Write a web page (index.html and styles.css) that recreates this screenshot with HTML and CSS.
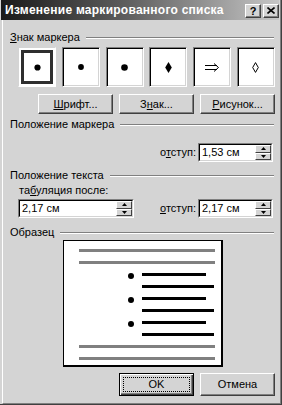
FILE: index.html
```html
<!DOCTYPE html>
<html lang="ru">
<head>
<meta charset="utf-8">
<title>Изменение маркированного списка</title>
<link rel="stylesheet" href="styles.css">
</head>
<body>
<div class="window">
  <div class="frame">
    <div class="titlebar">
      <span class="title">Изменение маркированного списка</span>
      <span class="tbtns">
        <span class="tbtn q">?</span>
        <span class="tbtn x"><svg width="8" height="7" viewBox="0 0 8 7"><path d="M0.5 0.5L7.5 6.5M7.5 0.5L0.5 6.5" stroke="#000" stroke-width="1.6" fill="none"/></svg></span>
      </span>
    </div>
    <div class="content">
      <div class="ghead g1"><span><u>З</u>нак маркера</span></div>
      <div class="boxes">
        <div class="box sel"><svg width="7" height="7" viewBox="0 0 7 7"><circle cx="3.5" cy="3.5" r="3.1"/></svg></div>
        <div class="box"><svg width="6" height="6" viewBox="0 0 6 6"><circle cx="3" cy="3" r="2.9"/></svg></div>
        <div class="box"><svg width="7" height="7" viewBox="0 0 7 7"><circle cx="3.5" cy="3.5" r="3.3"/></svg></div>
        <div class="box"><svg width="7" height="11" viewBox="0 0 7 11"><path d="M3.5 0L6.8 5.5L3.5 11L0.2 5.5Z"/></svg></div>
        <div class="box"><svg width="15" height="9" viewBox="0 0 15 9"><path d="M0 2.5H12M0 6.5H12M9 0.5L13.5 4.5L9 8.5" stroke="#000" stroke-width="1" fill="none"/></svg></div>
        <div class="box"><svg width="7" height="11" viewBox="0 0 7 11"><path d="M3.5 0.6L6.3 5.5L3.5 10.4L0.7 5.5Z" stroke="#000" stroke-width="1" fill="none"/></svg></div>
      </div>
      <div class="btnrow top">
        <div class="btn"><span><u>Ш</u>рифт...</span></div>
        <div class="btn"><span>З<u>н</u>ак...</span></div>
        <div class="btn"><span><u>Р</u>исунок...</span></div>
      </div>
      <div class="ghead g2"><span>Положение маркера</span></div>
      <div class="spinrow r1">
        <span class="lbl">о<u>т</u>ступ:</span>
        <div class="spin w-small">
          <div class="spin-in">
            <span class="val">1,53 см</span>
            <span class="arrows">
              <span class="arr up"><svg width="5" height="3" viewBox="0 0 5 3"><path d="M2.5 0L5 3H0Z"/></svg></span>
              <span class="arr down"><svg width="5" height="3" viewBox="0 0 5 3"><path d="M0 0H5L2.5 3Z"/></svg></span>
            </span>
          </div>
        </div>
      </div>
      <div class="ghead g3"><span>Положение текста</span></div>
      <div class="sublbl">та<u>б</u>уляция после:</div>
      <div class="spinrow r2">
        <div class="spin w-wide">
          <div class="spin-in">
            <span class="val">2,17 см</span>
            <span class="arrows">
              <span class="arr up"><svg width="5" height="3" viewBox="0 0 5 3"><path d="M2.5 0L5 3H0Z"/></svg></span>
              <span class="arr down"><svg width="5" height="3" viewBox="0 0 5 3"><path d="M0 0H5L2.5 3Z"/></svg></span>
            </span>
          </div>
        </div>
        <div class="grp">
          <span class="lbl"><u>о</u>тступ:</span>
          <div class="spin w-small">
            <div class="spin-in">
              <span class="val">2,17 см</span>
              <span class="arrows">
                <span class="arr up"><svg width="5" height="3" viewBox="0 0 5 3"><path d="M2.5 0L5 3H0Z"/></svg></span>
                <span class="arr down"><svg width="5" height="3" viewBox="0 0 5 3"><path d="M0 0H5L2.5 3Z"/></svg></span>
              </span>
            </div>
          </div>
        </div>
      </div>
      <div class="ghead g4"><span>Образец</span></div>
      <div class="sample">
        <div class="ln gray"></div>
        <div class="ln gray"></div>
        <div class="ln brow"><span class="dot"></span><span class="bl short"></span></div>
        <div class="ln brow"><span class="bl long"></span></div>
        <div class="ln brow"><span class="dot"></span><span class="bl short"></span></div>
        <div class="ln brow"><span class="bl long"></span></div>
        <div class="ln brow"><span class="dot"></span><span class="bl short"></span></div>
        <div class="ln brow"><span class="bl long"></span></div>
        <div class="ln gray"></div>
        <div class="ln gray"></div>
      </div>
      <div class="btnrow bottom">
        <div class="btn default"><span>OK</span></div>
        <div class="btn"><span>Отмена</span></div>
      </div>
    </div>
  </div>
</div>
</body>
</html>
```

FILE: styles.css
```css
html, body {
  margin: 0;
  padding: 0;
  background: #d4d4d4;
}
body {
  font-family: "Liberation Sans", Arial, sans-serif;
  font-size: 11px;
  color: #000;
}
u {
  text-decoration: underline;
  text-underline-offset: 1px;
}
.window {
  width: 282px;
  height: 405px;
  box-sizing: border-box;
  background: #d4d4d4;
  border-right: 1px solid #404040;
  border-bottom: 1px solid #404040;
  padding-left: 2px;
  display: flex;
  flex-direction: column;
}
.frame {
  flex: 1;
  display: flex;
  flex-direction: column;
  border-left: 1px solid #fff;
  border-right: 1px solid #808080;
  border-bottom: 1px solid #808080;
}
.titlebar {
  height: 20px;
  margin-left: -2px;
  margin-right: 1px;
  display: flex;
  align-items: flex-start;
  justify-content: space-between;
  background: linear-gradient(to right, #1a1a1a 0%, #5e5e5e 45%, #c6c6c6 100%);
}
.title {
  color: #fff;
  font-weight: bold;
  font-size: 12px;
  letter-spacing: 0.25px;
  line-height: 20px;
  padding-left: 4px;
  white-space: nowrap;
}
.tbtns {
  display: flex;
  gap: 2px;
  margin-top: 4px;
}
.tbtn {
  width: 16px;
  height: 14px;
  box-sizing: border-box;
  background: #d4d4d4;
  border: 1px solid;
  border-color: #fff #404040 #404040 #fff;
  box-shadow: inset -1px -1px 0 #808080;
  display: flex;
  align-items: center;
  justify-content: center;
}
.tbtn.q {
  font-weight: bold;
  font-size: 11px;
  line-height: 12px;
  padding-bottom: 1px;
}
.tbtn.x svg {
  margin-bottom: 1px;
}
.content {
  flex: 1;
  display: flex;
  flex-direction: column;
  padding: 0 5px 0 7px;
}
.ghead {
  display: flex;
  align-items: center;
  height: 13px;
  line-height: 13px;
  white-space: nowrap;
}
.ghead::after {
  content: "";
  flex: 1;
  height: 0;
  border-top: 1px solid #808080;
  border-bottom: 1px solid #fff;
  margin-left: 6px;
  margin-right: 1px;
}
.g1 { margin-top: 11px; }
.g2 { margin-top: 4px; }
.g3 { margin-top: 7px; }
.g4 { margin-top: 8px; }

.boxes {
  margin-top: 3px;
  padding-left: 8px;
  height: 40px;
  display: flex;
  justify-content: space-between;
}
.box {
  width: 38px;
  height: 40px;
  box-sizing: border-box;
  background: #fff;
  border: 1px solid;
  border-color: #808080 #fff #fff #808080;
  box-shadow: inset 1px 1px 0 #000, inset -1px -1px 0 #d4d4d4;
  display: flex;
  align-items: center;
  justify-content: center;
}
.box svg {
  display: block;
  fill: #000;
}
.box.sel {
  border-color: #d4d4d4 #fff #fff #d4d4d4;
  box-shadow: inset 0 0 0 2px #fff, inset 0 0 0 5px #2e2e2e;
}

.btnrow {
  display: flex;
  justify-content: flex-end;
  gap: 6px;
}
.btnrow.top {
  margin-top: 7px;
}
.btnrow.bottom {
  margin-top: 6px;
}
.btn {
  position: relative;
  width: 75px;
  height: 20px;
  box-sizing: border-box;
  background: #d4d4d4;
  border: 1px solid;
  border-color: #fff #404040 #404040 #fff;
  box-shadow: inset -1px -1px 0 #808080;
  display: flex;
  align-items: center;
  justify-content: center;
  line-height: 13px;
}
.btnrow.bottom .btn {
  height: 23px;
}
.btn.default {
  border-color: #000;
  box-shadow: inset 1px 1px 0 #fff, inset -1px -1px 0 #404040, inset -2px -2px 0 #808080;
}
.btn.default::after {
  content: "";
  position: absolute;
  left: 3px;
  top: 3px;
  right: 3px;
  bottom: 3px;
  border: 1px dotted #000;
}

.spinrow {
  display: flex;
  align-items: center;
  height: 19px;
}
.spinrow.r1 {
  margin-top: 12px;
  justify-content: flex-end;
  padding-right: 2px;
}
.spinrow.r2 {
  margin-top: 2px;
  justify-content: space-between;
  padding-left: 8px;
  padding-right: 2px;
}
.grp {
  display: flex;
  align-items: center;
}
.lbl {
  margin-right: 2px;
  line-height: 13px;
}
.sublbl {
  margin-top: 2px;
  padding-left: 9px;
  height: 13px;
  line-height: 13px;
}
.spin {
  height: 19px;
  box-sizing: border-box;
  border: 1px solid;
  border-color: #808080 #fff #fff #808080;
  background: #fff;
}
.w-small { width: 75px; }
.w-wide { width: 116px; }
.spin-in {
  height: 100%;
  box-sizing: border-box;
  border: 1px solid;
  border-color: #000 #d4d4d4 #d4d4d4 #000;
  display: flex;
}
.val {
  flex: 1;
  padding-left: 2px;
  line-height: 15px;
  white-space: nowrap;
}
.arrows {
  width: 16px;
  display: flex;
  flex-direction: column;
}
.arr {
  flex: 1;
  box-sizing: border-box;
  background: #d4d4d4;
  border: 1px solid;
  border-color: #fff #404040 #404040 #fff;
  display: flex;
  align-items: center;
  justify-content: center;
}
.arr svg {
  display: block;
  fill: #000;
}

.sample {
  margin-top: 1px;
  margin-left: 53px;
  width: 160px;
  height: 127px;
  box-sizing: border-box;
  background: #fff;
  border: 1px solid #000;
  border-width: 1px 2px 2px 1px;
  padding-top: 8px;
  display: flex;
  flex-direction: column;
  gap: 9px;
}
.ln {
  height: 3px;
  flex: none;
}
.ln.gray {
  margin-left: 15px;
  width: 136px;
  background: #808080;
}
.ln.brow {
  display: flex;
  align-items: flex-start;
  padding-left: 64px;
}
.dot {
  width: 6px;
  height: 6px;
  margin-top: 0;
  border-radius: 50%;
  background: #000;
  margin-right: 8px;
  flex: none;
}
.bl {
  height: 3px;
  background: #000;
  flex: none;
}
.bl.short {
  width: 64px;
}
.bl.long {
  width: 72px;
  margin-left: 14px;
}
```
